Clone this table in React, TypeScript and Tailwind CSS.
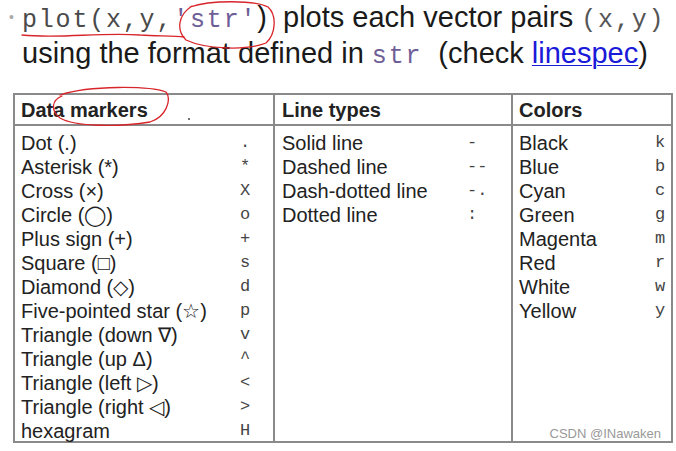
import React from 'react';

type Row = { label: string; code: string };

const markers: Row[] = [
  { label: 'Dot (.)', code: '.' },
  { label: 'Asterisk (*)', code: '*' },
  { label: 'Cross (×)', code: 'X' },
  { label: 'Circle (◯)', code: 'o' },
  { label: 'Plus sign (+)', code: '+' },
  { label: 'Square (□)', code: 's' },
  { label: 'Diamond (◇)', code: 'd' },
  { label: 'Five-pointed star (☆)', code: 'p' },
  { label: 'Triangle (down ∇)', code: 'v' },
  { label: 'Triangle (up Δ)', code: '^' },
  { label: 'Triangle (left ▷)', code: '<' },
  { label: 'Triangle (right ◁)', code: '>' },
  { label: 'hexagram', code: 'H' },
];

const lines: Row[] = [
  { label: 'Solid line', code: '-' },
  { label: 'Dashed line', code: '--' },
  { label: 'Dash-dotted line', code: '-.' },
  { label: 'Dotted line', code: ':' },
];

const colors: Row[] = [
  { label: 'Black', code: 'k' },
  { label: 'Blue', code: 'b' },
  { label: 'Cyan', code: 'c' },
  { label: 'Green', code: 'g' },
  { label: 'Magenta', code: 'm' },
  { label: 'Red', code: 'r' },
  { label: 'White', code: 'w' },
  { label: 'Yellow', code: 'y' },
];

const sans = "font-['Liberation_Sans',Arial,sans-serif]";
const mono = "font-['Liberation_Mono','Courier_New',monospace]";
// courier-like look: smaller glyphs, same advance
const code = `${mono} text-[25px] tracking-[1.8px]`;

function Column({ rows, codeClass }: { rows: Row[]; codeClass: string }) {
  return (
    <div className="flex flex-col pt-[5px]">
      {rows.map((r) => (
        <div key={r.label} className="flex h-6 items-center">
          <span className="flex-1 whitespace-nowrap text-[20px] leading-6 text-[#222]">{r.label}</span>
          <span className={`${mono} text-[17px] leading-6 text-[#444] ${codeClass}`}>{r.code}</span>
        </div>
      ))}
    </div>
  );
}

export default function App() {
  return (
    <div className={`relative h-[451px] w-[676px] overflow-hidden bg-white ${sans}`}>
      {/* heading text */}
      <div className="pl-[22px] pt-[1px] text-[29px] leading-[33px] text-[#1a1a1a]">
        <div className="relative whitespace-nowrap">
          <span className="absolute left-[-13px] top-[0px] text-[14px] text-[#aaa]">•</span>
          <span className={`${code} text-[#4a4a4a]`}>plot(x,y,</span>
          <span className={`${code} text-[#6e5e98]`}>'str'</span>
          <span>)&nbsp; plots each vector pairs </span>
          <span className={`${code} tracking-[1.8px] text-[#555]`}>(x,y)</span>
        </div>
        <div className="whitespace-nowrap">
          <span>using the format defined in </span>
          <span className={`${code} text-[#6e5e98]`}>str</span>
          <span>&nbsp; (check </span>
          <span className="text-[#1a1ad8] underline decoration-1 underline-offset-2">linespec</span>
          <span>)</span>
        </div>
      </div>

      {/* table */}
      <div className="absolute left-[13px] top-[93px] grid h-[350px] w-[660px] grid-cols-[258px_238px_1fr] grid-rows-[31px_1fr] border-2 border-[#8a8a8a]">
        <div className="relative flex items-center border-b-2 border-[#8a8a8a] pl-[6px] text-[20px] font-bold text-[#222]">
          Data markers
          <span className="absolute left-[173px] top-[23px] h-[2px] w-[2px] rounded-full bg-[#444]" />
        </div>
        <div className="flex items-center border-b-2 border-l-2 border-[#8a8a8a] pl-[7px] text-[20px] font-bold text-[#222]">
          Line types
        </div>
        <div className="flex items-center border-b-2 border-l-2 border-[#8a8a8a] pl-[6px] text-[20px] font-bold text-[#222]">
          Colors
        </div>
        <div className="pl-[6px] pr-[16px]">
          <Column rows={markers} codeClass="w-6 text-center" />
        </div>
        <div className="border-l-2 border-[#8a8a8a] pl-[7px] pr-[14px]">
          <Column rows={lines} codeClass="w-[30px] text-left" />
        </div>
        <div className="relative border-l-2 border-[#8a8a8a] pl-[6px] pr-[3px]">
          <Column rows={colors} codeClass="w-4 text-center" />
          <span className="absolute bottom-[1px] right-[10px] text-[13px] leading-4 text-[#999]">CSDN @INawaken</span>
        </div>
      </div>

      {/* red pen annotations */}
      <svg className="pointer-events-none absolute left-0 top-0" width="676" height="451">
        <g fill="none" stroke="#d8252a" strokeWidth="1.3" strokeLinecap="round">
          <path d="M22 35 C60 39 100 32 140 35 C160 36 175 36 184 37" />
          <path d="M190 7 C210 0 255 0 268 7 C277 15 276 34 266 43 C246 51 205 49 186 40 C176 30 178 15 192 6" />
          <path d="M60 95 C90 85 150 86 166 92 C172 100 166 117 150 122 C120 127 75 127 60 118 C50 110 52 100 62 96" />
        </g>
      </svg>
    </div>
  );
}
